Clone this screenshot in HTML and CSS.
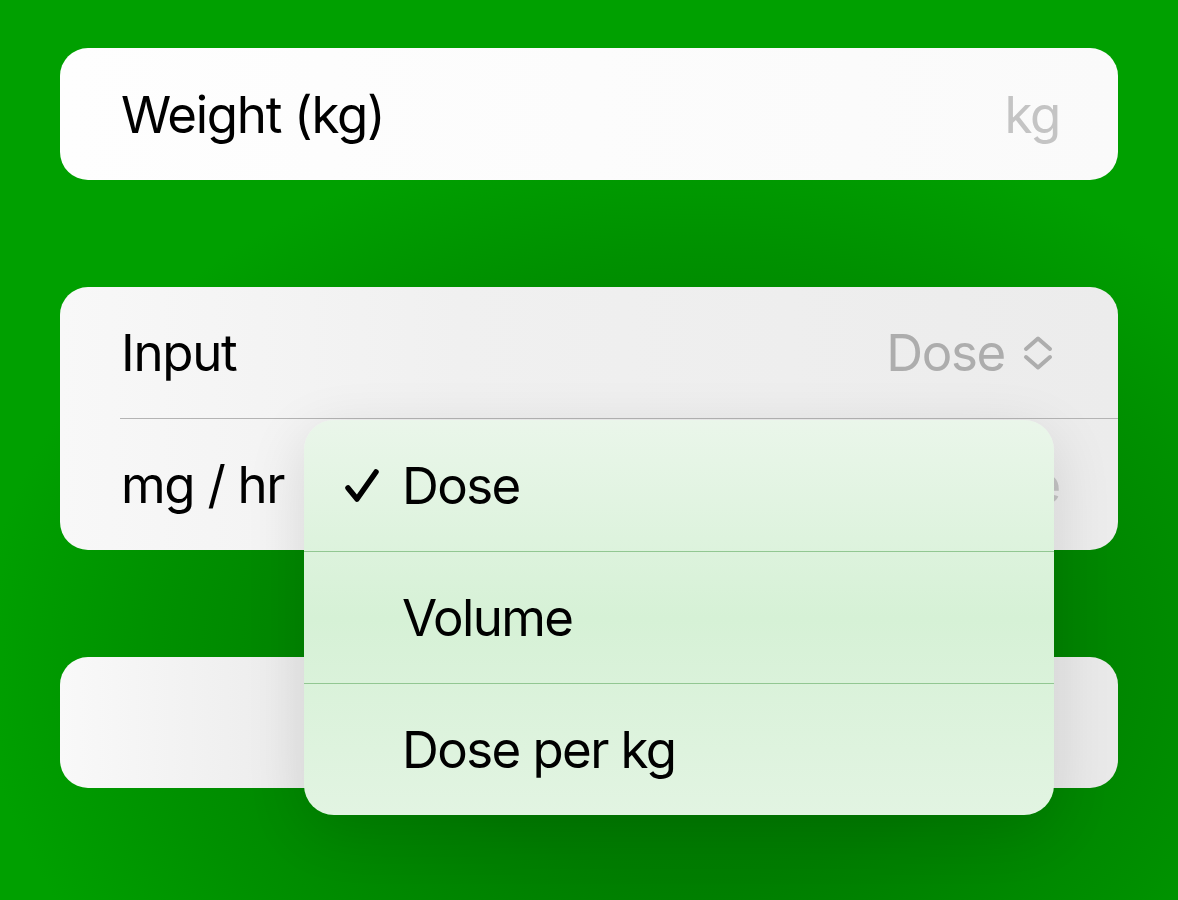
FILE: index.html
```html
<!DOCTYPE html>
<html lang="en">
<head>
    <meta charset="UTF-8">
    <meta name="viewport" content="width=device-width, initial-scale=1.0">
    <title>Infusion</title>
    <link rel="stylesheet" href="styles.css">
</head>
<body>
    <div class="screen">
        <div class="card card-top">
            <div class="row">
                <span class="label">Weight (kg)</span>
                <span class="placeholder">kg</span>
            </div>
        </div>

        <div class="card card-mid">
            <div class="row">
                <span class="label">Input</span>
                <span class="picker">
                    Dose
                    <svg class="updown" width="32" height="36" viewBox="0 0 32 36">
                        <path d="M4 14 L16 3.5 L28 14" />
                        <path d="M4 22 L16 32.5 L28 22" />
                    </svg>
                </span>
            </div>
            <div class="divider"></div>
            <div class="row">
                <span class="label">mg / hr</span>
                <span class="placeholder">Dose</span>
            </div>
        </div>

        <div class="card card-low">
            <div class="row"></div>
        </div>

        <div class="menu">
            <div class="menu-item">
                <svg class="check" width="36" height="36" viewBox="0 0 36 36">
                    <path d="M4 20 L13 31 L32 4" />
                </svg>
                <span>Dose</span>
            </div>
            <div class="menu-item">
                <span>Volume</span>
            </div>
            <div class="menu-item">
                <span>Dose per kg</span>
            </div>
        </div>
    </div>
</body>
</html>
```

FILE: styles.css
```css
body {
    margin: 0;
    background: radial-gradient(ellipse 720px 540px at 700px 660px, #007500 0%, #007d00 40%, #009000 75%, #00a000 100%), #00a000;
    font-family: Inter, "Liberation Sans", sans-serif;
    height: 900px;
    overflow: hidden;
}
.screen {
    position: relative;
    padding: 48px 60px;
    display: flex;
    flex-direction: column;
    gap: 107px;
}
.card {
    border-radius: 28px;
    overflow: hidden;
}
.card-top {
    background: linear-gradient(90deg, #fefefe, #fafafa);
}
.card-mid {
    background: linear-gradient(90deg, #f8f8f8 0, #f0f0f0 400px, #ececec 100%);
}
.card-low {
    background: linear-gradient(90deg, #f9f9f9 0, #ececec 240px, #e9e9e9 100%);
}
.row {
    height: 131px;
    display: flex;
    align-items: center;
    justify-content: space-between;
    padding: 0 58px 0 61px;
    font-size: 51px;
    letter-spacing: -1.3px;
}
.card-top .row {
    height: 132px;
}
.label {
    color: #000;
}
.placeholder {
    color: #c4c4c4;
}
.picker {
    display: flex;
    align-items: center;
    gap: 17px;
    color: #adadad;
    margin-right: 6px;
}
.updown path {
    fill: none;
    stroke: #adadad;
    stroke-width: 4;
    stroke-linecap: round;
    stroke-linejoin: round;
}
.divider {
    height: 1px;
    background: #b4b4b4;
    margin-left: 60px;
}
.menu {
    position: absolute;
    left: 304px;
    top: 420px;
    width: 750px;
    border-radius: 30px;
    overflow: hidden;
    background: linear-gradient(180deg, #eaf6ea 0%, #d6f1d6 50%, #e2f4e2 100%);
    box-shadow: 0 16px 60px rgba(0, 0, 0, 0.12);
}
.menu-item {
    height: 131px;
    display: flex;
    align-items: center;
    padding-left: 98px;
    font-size: 51px;
    letter-spacing: -1.6px;
    color: #000;
    position: relative;
}
.menu-item + .menu-item {
    border-top: 1px solid #92c792;
}
.check {
    position: absolute;
    left: 40px;
    top: 48px;
}
.check path {
    fill: none;
    stroke: #000;
    stroke-width: 5.5;
    stroke-linecap: round;
    stroke-linejoin: round;
}
```
